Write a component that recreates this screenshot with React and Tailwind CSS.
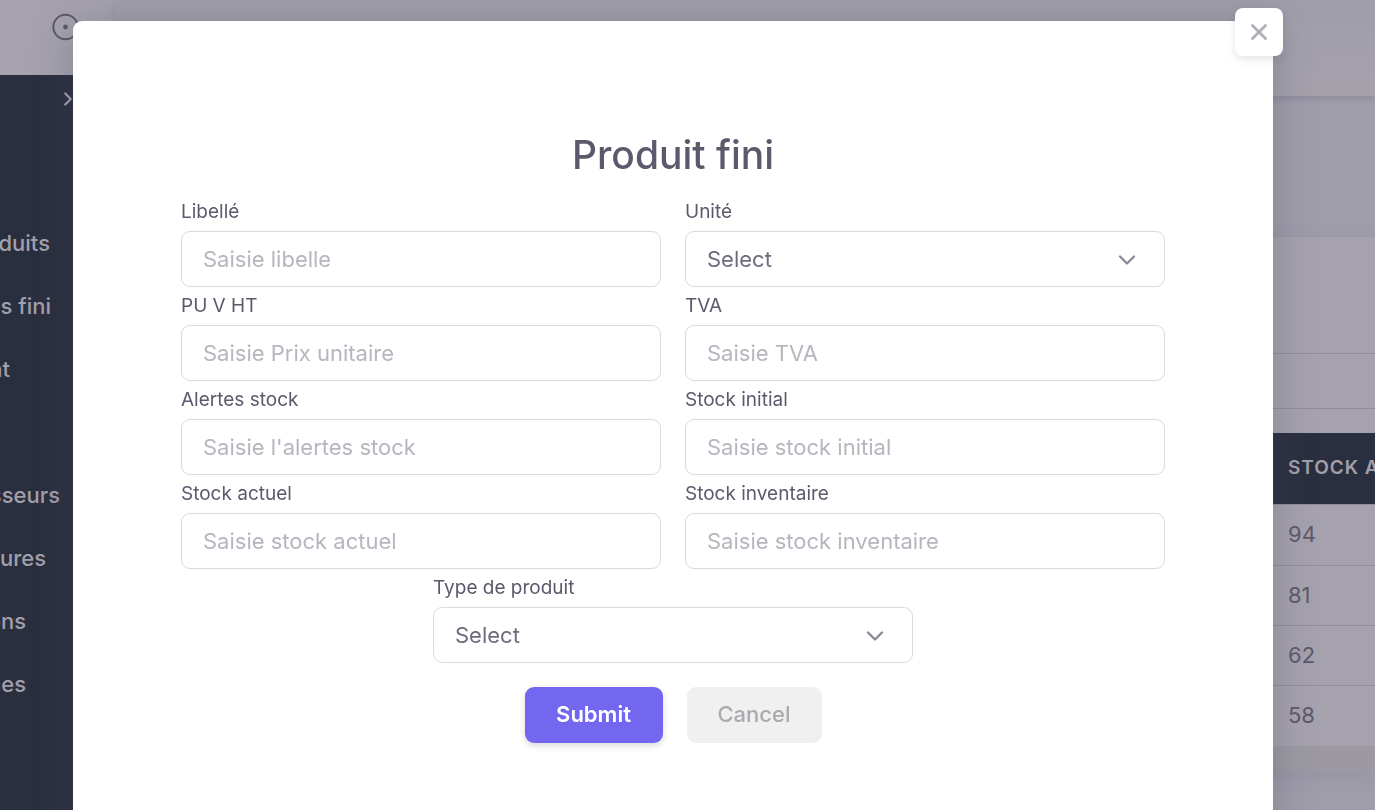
import { ChevronDown, ChevronRight, X } from "lucide-react";

const navItems = [
  { text: "duits", width: "w-[50px]" },
  { text: "s fini", width: "w-[51px]" },
  { text: "nt", width: "w-[10px]" },
  { text: "", width: "w-[10px]" },
  { text: "sseurs", width: "w-[60px]" },
  { text: "ures", width: "w-[46px]" },
  { text: "ons", width: "w-[26px]" },
  { text: "nes", width: "w-[26px]" },
];

const stockRows = [94, 81, 62, 58];

const fields = [
  { id: "libelle", label: "Libellé", placeholder: "Saisie libelle" },
  { id: "unite", label: "Unité", select: true },
  { id: "prix", label: "PU V HT", placeholder: "Saisie Prix unitaire" },
  { id: "tva", label: "TVA", placeholder: "Saisie TVA" },
  { id: "alertes", label: "Alertes stock", placeholder: "Saisie l'alertes stock" },
  { id: "initial", label: "Stock initial", placeholder: "Saisie stock initial" },
  { id: "actuel", label: "Stock actuel", placeholder: "Saisie stock actuel" },
  { id: "inventaire", label: "Stock inventaire", placeholder: "Saisie stock inventaire" },
];

const control =
  "block h-14 w-full rounded-[9px] border border-[#dbdade] bg-white px-[21px] text-[22px] outline-none";

function Field({ id, label, placeholder, select }) {
  return (
    <div>
      <label htmlFor={id} className="flex h-[38px] items-center text-[19px] text-[#5d596c]">
        {label}
      </label>
      {select ? (
        <div className="relative">
          <select id={id} className={`${control} appearance-none text-[#6f6b7d]`}>
            <option>Select</option>
          </select>
          <ChevronDown
            className="pointer-events-none absolute top-[15px] right-[24px] size-7 text-[#8b8896]"
            strokeWidth={2}
          />
        </div>
      ) : (
        <input
          id={id}
          type="text"
          placeholder={placeholder}
          className={`${control} text-[#6f6b7d] placeholder:text-[#b7b5be]`}
        />
      )}
    </div>
  );
}

function Sidebar() {
  return (
    <aside className="flex w-[115px] shrink-0 flex-col bg-[#2a2f3f]">
      <div className="flex h-[75px] items-start bg-[#a5a2ad] pt-[13px] pl-[52px]">
        <svg viewBox="0 0 28 28" className="size-7 text-[#5d576c]" fill="none" stroke="currentColor" strokeWidth="2">
          <circle cx="13.5" cy="14" r="12.2" />
          <circle cx="13.5" cy="14" r="2.4" fill="currentColor" stroke="none" />
        </svg>
      </div>
      <div className="flex h-[137px] items-start pt-[13px] pl-[57px] text-[#a5a2ad]">
        <ChevronRight className="size-[22px]" strokeWidth={2.4} />
      </div>
      <nav className="flex flex-col">
        {navItems.map((item, i) =>
          item.text ? (
            <a
              key={i}
              href="#"
              className={`flex h-[63px] items-center justify-end whitespace-nowrap text-[22px] font-medium text-[#a29fab] ${item.width}`}
            >
              {item.text}
            </a>
          ) : (
            <div key={i} className="h-[63px]" />
          )
        )}
      </nav>
    </aside>
  );
}

function Page() {
  return (
    <div className="flex min-h-screen overflow-hidden bg-[#a09dab]">
      <Sidebar />
      <main className="flex min-w-0 grow flex-col">
        <header className="h-24 bg-linear-to-b from-[#a09dab] to-[#a5a2ac] shadow-[0_3px_6px_rgba(75,70,92,0.2)]" />
        <section className="mt-[141px] bg-[#a5a2ad] shadow-[0_4px_18px_rgba(75,70,92,0.12)]">
          <div className="h-[117px] border-b border-[#918d9c]" />
          <div className="h-[55px] border-b border-[#918d9c]" />
          <table className="mt-6 ml-auto w-40 border-collapse text-left text-[#5d596c]">
            <thead>
              <tr className="h-[71px] bg-[#2a2f3f]">
                <th className="p-0 pl-[73px] text-[19px] font-semibold tracking-wider whitespace-nowrap text-[#a29fab]">
                  <div className="w-[87px] overflow-hidden">STOCK A</div>
                </th>
              </tr>
            </thead>
            <tbody>
              {stockRows.map((n) => (
                <tr key={n} className="h-[61px] border-t border-[#918d9c] nth-3:h-[60px] nth-2:h-[60px]">
                  <td className="p-0 pl-[73px] text-[22px]">{n}</td>
                </tr>
              ))}
            </tbody>
          </table>
          <div className="h-[25px] bg-[#9c99a3]" />
        </section>
      </main>
    </div>
  );
}

export default function App() {
  return (
    <div className="font-['Inter',sans-serif]">
      <Page />
      <div className="fixed inset-0 overflow-y-auto pt-[21px] pr-[29px] [scrollbar-width:none]">
        <div
          role="dialog"
          aria-labelledby="dialog-title"
          className="relative mx-auto max-w-[1200px] rounded-[9px] bg-white px-24 pt-[105px] pb-28 shadow-[0_6px_42px_rgba(75,70,92,0.32)]"
        >
          <button
            type="button"
            aria-label="Close"
            className="absolute -top-[13px] -right-[10px] flex size-12 items-center justify-center rounded-lg bg-white text-[#b0adb8] shadow-[0_3px_9px_rgba(75,70,92,0.15)]"
          >
            <X className="size-[26px]" strokeWidth={2.6} />
          </button>
          <form className="px-3" onSubmit={(e) => e.preventDefault()}>
            <h3 id="dialog-title" className="mb-[9px] text-center text-[39px] leading-[58px] font-medium text-[#5d596c]">
              Produit fini
            </h3>
            <div className="grid grid-cols-2 gap-x-6">
              {fields.map((f) => (
                <Field key={f.id} {...f} />
              ))}
            </div>
            <div className="mx-auto w-[480px]">
              <Field id="type" label="Type de produit" select />
            </div>
            <div className="mt-6 flex justify-center gap-6">
              <button
                type="submit"
                className="h-14 w-[138px] rounded-[9px] bg-[#7367f0] pb-0.5 text-[22px] font-semibold text-white shadow-[0_3px_6px_rgba(75,70,92,0.2)]"
              >
                Submit
              </button>
              <button
                type="button"
                className="h-14 w-[135px] rounded-[9px] bg-[#f0f0f1] pb-0.5 text-[22px] font-medium text-[#a9abae]"
              >
                Cancel
              </button>
            </div>
          </form>
        </div>
      </div>
    </div>
  );
}
